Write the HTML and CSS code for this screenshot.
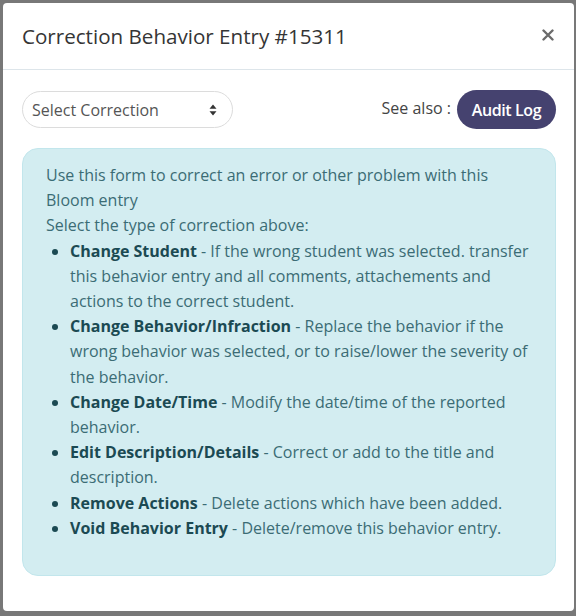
FILE: index.html
```
<!DOCTYPE html>
<html>
<head>
<meta charset="utf-8">
<link rel="stylesheet" href="styles.css">
</head>
<body>
<div class="modal">
  <div class="modal-header">
    <h4 class="modal-title">Correction Behavior Entry #15311</h4>
    <span class="close" aria-label="Close"><svg width="12" height="12" viewBox="0 0 12 12"><path d="M1.5 1.5 L10.5 10.5 M10.5 1.5 L1.5 10.5" stroke="#6b6b6b" stroke-width="2.4" stroke-linecap="round"/></svg></span>
  </div>
  <div class="modal-body">
    <div class="toolbar">
      <div class="select">
        <span>Select Correction</span>
        <svg width="8" height="12" viewBox="0 0 8 12"><path d="M4 0.5 L7.5 4.8 L0.5 4.8 Z M4 11.5 L7.5 7.2 L0.5 7.2 Z" fill="#333"/></svg>
      </div>
      <div class="see-also">
        <span>See also :</span>
        <span class="btn">Audit Log</span>
      </div>
    </div>
    <div class="alert">
      <div>Use this form to correct an error or other problem with this Bloom entry</div>
      <div>Select the type of correction above:</div>
      <ul>
        <li><b>Change Student</b> - If the wrong student was selected. transfer this behavior entry and all comments, attachements and actions to the correct student.</li>
        <li><b>Change Behavior/Infraction</b> - Replace the behavior if the wrong behavior was selected, or to raise/lower the severity of the behavior.</li>
        <li><b>Change Date/Time</b> - Modify the date/time of the reported behavior.</li>
        <li><b>Edit Description/Details</b> - Correct or add to the title and description.</li>
        <li><b>Remove Actions</b> - Delete actions which have been added.</li>
        <li><b>Void Behavior Entry</b> - Delete/remove this behavior entry.</li>
      </ul>
    </div>
  </div>
</div>
</body>
</html>
```
FILE: styles.css
```
html, body {
  margin: 0;
  padding: 0;
  background: #787878;
  font-family: "Open Sans", "Noto Sans", sans-serif;
}
body {
  padding: 3px 2px 5px 3px;
}
.modal {
  background: #fff;
  height: 608px;
  border-radius: 4px;
  box-sizing: border-box;
}
.modal-header {
  height: 67px;
  box-sizing: border-box;
  border-bottom: 1px solid #dde5ea;
  display: flex;
  align-items: center;
  justify-content: space-between;
  padding: 0 20px 0 19px;
}
.modal-title {
  margin: 0;
  font-size: 20.6px;
  font-weight: 400;
  color: #353535;
}
.close {
  display: flex;
  margin-top: -2px;
}
.modal-body {
  padding: 20px 18px 0 19px;
}
.toolbar {
  display: flex;
  justify-content: space-between;
  align-items: center;
}
.select {
  width: 211px;
  height: 37px;
  box-sizing: border-box;
  border: 1px solid #dcdcdc;
  border-radius: 19px;
  display: flex;
  align-items: center;
  justify-content: space-between;
  padding: 0 15px 0 9px;
  font-size: 16px;
  color: #555;
}
.see-also {
  display: flex;
  align-items: center;
  gap: 6px;
  font-size: 16px;
  color: #444;
}
.see-also > span:first-child {
  margin-top: -4px;
}
.btn {
  background: #45426f;
  color: #fff;
  font-size: 16px;
  font-weight: 600;
  letter-spacing: -0.4px;
  height: 39px;
  width: 99px;
  border-radius: 20px;
  display: flex;
  align-items: center;
  justify-content: center;
  box-sizing: border-box;
}
.alert {
  margin-top: 19px;
  background: #d3edf1;
  border: 1px solid #c2e6ec;
  border-radius: 16px;
  padding: 14px 23px 34px 23px;
  font-size: 16px;
  line-height: 25.2px;
  color: #3b6c75;
}
.alert ul {
  margin: 0;
  padding-left: 24px;
}
.alert b {
  font-weight: 700;
  color: #1b4a53;
}
.alert li::marker {
  color: #1b4a53;
}
```
